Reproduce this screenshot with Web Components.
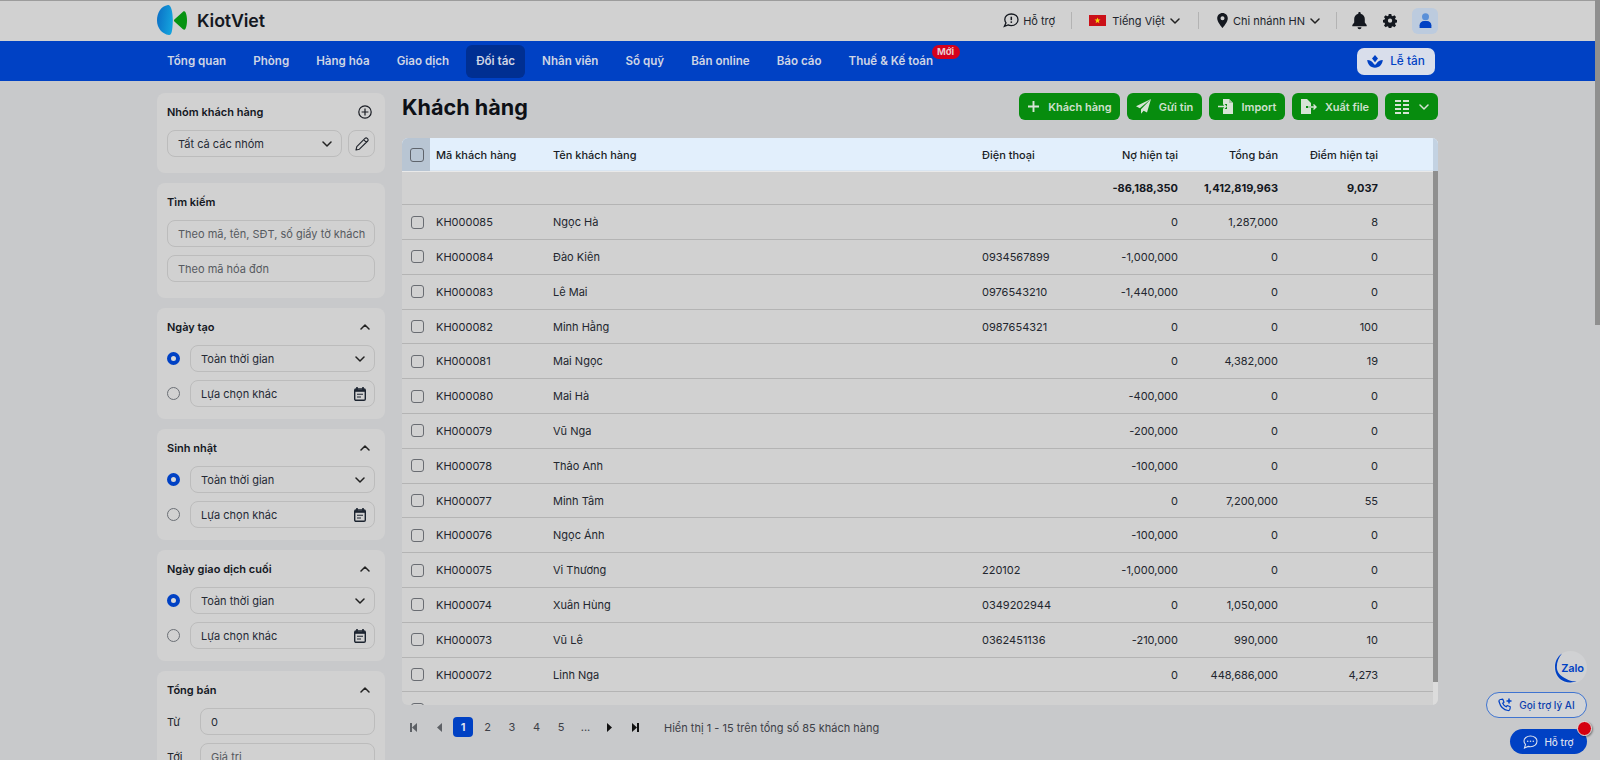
<!DOCTYPE html>
<html lang="vi"><head><meta charset="utf-8"><title>Khách hàng</title>
<style>
html,body{margin:0;padding:0;height:760px;overflow:hidden;background:#c8c9cb;font-family:Inter,"Noto Sans",sans-serif;color:#111}
</style></head><body>
<kv-app></kv-app>
<script>
const I={
 chev:'<svg width="10" height="6" viewBox="0 0 10 6" fill="none" stroke="currentColor" stroke-width="1.5" stroke-linecap="round" stroke-linejoin="round"><path d="M1 1l4 4 4-4"/></svg>',
 up:'<svg width="10" height="6" viewBox="0 0 10 6" fill="none" stroke="currentColor" stroke-width="1.5" stroke-linecap="round" stroke-linejoin="round"><path d="M1 5l4-4 4 4"/></svg>',
 cal:'<svg width="12" height="14" viewBox="0 0 12 14" fill="none"><path d="M3 0v3M9 0v3" stroke="#1c2430" stroke-width="1.6"/><rect x=".7" y="2" width="10.6" height="11.3" rx="1.3" stroke="#1c2430" stroke-width="1.4"/><path d="M1 2.6h10v2.2H1z" fill="#1c2430"/><path d="M3 7.3h6M3 10h4" stroke="#1c2430" stroke-width="1.1"/></svg>'
};
function def(name,render,css){
 customElements.define(name,class extends HTMLElement{
  connectedCallback(){ if(this.shadowRoot)return; const r=this.attachShadow({mode:'open'}); r.innerHTML='<style>'+css+'</style>'+render(this); }
 });
}
const a=(e,n,d='')=>e.getAttribute(n)??d;

def('kv-logo',()=>`
<svg width="31" height="31" viewBox="0 0 31 31"><defs><linearGradient id="g" x1="0" y1="0" x2="1" y2=".3"><stop offset="0" stop-color="#0b6cc4"/><stop offset="1" stop-color="#13a0dc"/></linearGradient></defs>
<path d="M11 0C4 1 0 8 0 15.500 0 23 5 29 12 30c2.500.3 3.500-3 3.800-15C15.800 7 14-.5 11 0z" fill="url(#g)"/>
<path d="M17.400 14.500L26 6.800c1-.8 2-.5 2.500.5 1 2.200 1.500 5.200 1.500 8.200s-.5 6-1.500 8.200c-.5 1-1.500 1.300-2.500.5l-8.600-7.700c-.6-.5-.6-1.500 0-2z" fill="#079312"/></svg><span>KiotViet</span>`,
`:host{display:flex;align-items:center;gap:9px}svg{display:block}span{font:600 17.8px Inter,sans-serif;color:#14181f;letter-spacing:-.1px}`);

def('kv-topbar',()=>`
<div class="wrap"><kv-logo></kv-logo><div class="right">
<span class="it"><svg width="16" height="15" viewBox="0 0 16 15" fill="none"><path d="M8.300 1C4.500 1 1.800 3.400 1.800 6.500c0 1.300.5 2.400 1.200 3.300L1.400 13.300l3.700-1.400c1 .5 2 .7 3.200.7 3.800 0 6.700-2.600 6.700-5.900C15 3.400 12.100 1 8.300 1z" stroke="#14181f" stroke-width="1.300"/><path d="M8.300 3.700v3.500" stroke="#14181f" stroke-width="1.500"/><circle cx="8.300" cy="9.100" r=".9" fill="#14181f"/></svg><span style="margin-left:4px">Hỗ trợ</span></span>
<i class="d" style="margin:0 17px 0 16px"></i>
<span class="it"><svg width="17" height="11" viewBox="0 0 17 11"><rect width="17" height="11" fill="#cb1018"/><path d="M8.500 2.400l.8 2.200h2.200L9.700 6l.7 2.200-1.900-1.300-1.900 1.300.7-2.200-1.800-1.400h2.200z" fill="#f6d70d"/></svg><span style="margin-left:6px">Tiếng Việt</span><span class="c" style="margin-left:5px">${I.chev}</span></span>
<i class="d" style="margin:0 18px 0 18px"></i>
<span class="it"><svg width="11" height="15" viewBox="0 0 11 15"><path fill-rule="evenodd" d="M5.500 0C2.500 0 .2 2.400.2 5.300c0 3.600 4.400 8.700 5.300 9.700.9-1 5.300-6.100 5.300-9.700C10.800 2.400 8.500 0 5.500 0zm0 7.300a2 2 0 110-4 2 2 0 010 4z" fill="#14181f"/></svg><span style="margin-left:5px">Chi nhánh HN</span><span class="c" style="margin-left:5px">${I.chev}</span></span>
<i class="d" style="margin:0 15px 0 16px"></i>
<svg width="15" height="18" viewBox="0 0 15 18"><path d="M7.500 0c-.7 0-1.200.5-1.200 1.200v.5C3.700 2.300 2.200 4.400 2.200 7v3.600L.3 13v1.200h14.400V13l-1.900-2.400V7c0-2.600-1.500-4.700-4.100-5.300v-.5C8.700.5 8.200 0 7.500 0z" fill="#14181f"/><path d="M5.500 15.300a2 2 0 004 0z" fill="#14181f"/></svg>
<svg style="margin-left:16px" width="14" height="14" viewBox="0 0 14 14"><path fill-rule="evenodd" d="M5.700 0h2.600l.4 1.900 1.200.5L11.500 1.300l1.800 1.800-1.100 1.600.5 1.200 1.900.4v2.600l-1.900.4-.5 1.200 1.100 1.600-1.800 1.800-1.600-1.100-1.200.5-.4 1.900H5.700l-.4-1.900-1.200-.5-1.600 1.100L.7 12.100l1.100-1.600-.5-1.200L-.6 8.900V6.300l1.900-.4.5-1.200L.7 3.100l1.800-1.800 1.600 1.100 1.200-.5zM7 9.300a2.200 2.200 0 100-4.500 2.200 2.200 0 000 4.500z" fill="#14181f" transform="translate(.3 -.1) scale(.96)"/></svg>
<span class="av"><svg width="13" height="15" viewBox="0 0 13 15"><circle cx="6.500" cy="3.700" r="3.500" fill="#5a90d8"/><path d="M.6 15v-2.700C.6 9.700 2.700 8 5 8h3c2.300 0 4.400 1.700 4.400 4.300V15z" fill="#0041c4"/></svg></span>
</div></div>`,
`:host{display:block;height:40px;background:#d1d1d1;border-top:1px solid #9c9c9c}
.wrap{width:1281px;height:40px;margin:0 auto;display:flex;align-items:center;justify-content:space-between;position:relative;top:-.5px}
.right{display:flex;align-items:center;font-size:11px;color:#20242c}
.it{display:inline-flex;align-items:center;white-space:nowrap}.c{display:inline-flex;color:#222}
.d{display:block;width:1px;height:17px;background:#b3b3b3}
.av{width:26px;height:26px;border-radius:6px;background:#bccbde;display:flex;align-items:center;justify-content:center;margin-left:15px}
svg{display:block;flex:none}`);

def('kv-nav',()=>{
 const items=['Tổng quan','Phòng','Hàng hóa','Giao dịch','Đối tác','Nhân viên','Sổ quỹ','Bán online','Báo cáo','Thuế & Kế toán'];
 return `<div class="wrap"><div class="menu">${items.map(t=>`<span class="m${t=='Đối tác'?' on':''}">${t}${t.startsWith('Thuế')?'<b>Mới</b>':''}</span>`).join('')}</div>
 <span class="lt"><svg width="16" height="13" viewBox="0 0 16 13" fill="#0041c4"><path d="M8 0L5 3.600 8 7.200l3-3.600zM.2 5c.4 4.500 3.300 7.500 7.800 7.800 4.500-.3 7.400-3.300 7.800-7.800-2.800.3-5.300 1.300-6.500 3.800L8 10 6.700 8.800C5.500 6.300 3 5.300.2 5z"/></svg>Lễ tân</span></div>`},
`:host{display:block;height:40px;background:#0041c4}
.wrap{width:1281px;height:40px;margin:0 auto;display:flex;align-items:center;justify-content:space-between}
.menu{display:flex;gap:7px;align-items:center}
.m{position:relative;padding:0 10px;height:33px;line-height:33px;border-radius:6px;font-size:11.6px;font-weight:600;color:#cfd5e4;white-space:nowrap}
.on{background:#002f92}
b{position:absolute;left:93px;top:0;width:28px;height:14px;line-height:14px;text-align:center;border-radius:8px;background:#d6001c;color:#e9c9cc;font-size:9.500px;font-weight:700}
.lt{display:flex;align-items:center;gap:7px;margin-right:3px;width:78px;height:27px;justify-content:center;box-sizing:border-box;border-radius:7px;background:#d9deeb;color:#0041c4;font-size:11.800px;font-weight:500}`);

def('kv-field',e=>`<span class="${a(e,'kind')=='ph'?'ph':''}">${a(e,'text')}</span>${e.hasAttribute('chev')?`<i>${I.chev}</i>`:''}${e.hasAttribute('cal')?`<i class="k">${I.cal}</i>`:''}`,
`:host{flex:1 0 0;min-width:0;display:flex;align-items:center;justify-content:space-between;min-height:27px;box-sizing:border-box;border:1px solid #bcbcbc;border-radius:8px;padding:0 8px 0 10px;font-size:11px;color:#252a35;white-space:nowrap}
:host(.col){flex:none}
.ph{color:#565a60}i{display:flex;color:#222;margin-right:1px}i.k{margin-right:0;margin-left:0}svg{display:block}`);

def('kv-card',e=>`<div class="h"><span>${a(e,'title')}</span>${e.hasAttribute('plus')?'<svg width="14" height="14" viewBox="0 0 14 14" fill="none" stroke="#1a1d24" stroke-width="1.200"><circle cx="7" cy="7" r="6.200"/><path d="M7 3.600v6.800M3.600 7h6.800"/></svg>':''}${e.hasAttribute('up')?`<i>${I.up}</i>`:''}</div><div class="b"><slot></slot></div>`,
`:host{display:block;background:#d1d1d1;border-radius:8px;padding:10px 10px var(--pb,12px)}
.h{height:18px;display:flex;align-items:center;justify-content:space-between;font-size:11px;font-weight:600;color:#14181f;margin-bottom:9px}
i{display:flex;color:#222;margin-right:5px}svg{display:block}.h svg[width="14"]{margin-right:3px}
.b{display:flex;flex-direction:column;gap:8px}`);

def('kv-choice',e=>`<i class="${e.hasAttribute('on')?'on':''}"></i><slot></slot>`,
`:host{display:flex;align-items:center;gap:10px}
i{flex:none;width:13px;height:13px;box-sizing:border-box;border-radius:50%;border:1px solid #6b6f75}
i.on{border:4px solid #0041c4;background:#d9d9d9}`);

def('kv-range',e=>`<span>${a(e,'label')}</span><slot></slot>`,
`:host{display:flex;align-items:center;font-size:11px;color:#20242c}span{width:33px;flex:none}`);

def('kv-btn',e=>`<slot></slot><span>${a(e,'text')}</span>`,
`:host{display:inline-flex;align-items:center;justify-content:center;gap:var(--g,8px);height:27px;border-radius:6px;background:#078c0e;color:#cfe0cd;font-size:11px;font-weight:600;white-space:nowrap}
span:empty{display:none}`);

def('kv-row',e=>{
 const v=a(e,'v').split('|');
 return `<i class="${e.classList.contains('sum')?'':'cb'}"></i>`+[0,1,2,3,4,5].map(k=>`<span class="${k>2?'r':''}">${v[k]??''}</span>`).join('');
},
`:host{display:grid;grid-template-columns:28px 123px 429px 100px 96px 100px 100px 60px;align-items:center;height:34.8px;box-sizing:border-box;border-bottom:1px solid #b4b4b4;font-size:11px;color:#22262e;white-space:nowrap}
.r{text-align:right}.cb{width:13px;height:13px;box-sizing:border-box;margin-left:9px;border:1px solid #696c72;border-radius:3px}
span:first-of-type{padding-left:6px}:host(.sum){font-weight:700;height:34.3px;color:#14181f}`);

def('kv-table',()=>{
 const d=[['KH000085','Ngọc Hà','','0','1,287,000','8'],['KH000084','Đào Kiên','0934567899','-1,000,000','0','0'],['KH000083','Lê Mai','0976543210','-1,440,000','0','0'],['KH000082','Minh Hằng','0987654321','0','0','100'],['KH000081','Mai Ngọc','','0','4,382,000','19'],['KH000080','Mai Hà','','-400,000','0','0'],['KH000079','Vũ Nga','','-200,000','0','0'],['KH000078','Thảo Anh','','-100,000','0','0'],['KH000077','Minh Tâm','','0','7,200,000','55'],['KH000076','Ngọc Ánh','','-100,000','0','0'],['KH000075','Vi Thương','220102','-1,000,000','0','0'],['KH000074','Xuân Hùng','0349202944','0','1,050,000','0'],['KH000073','Vũ Lê','0362451136','-210,000','990,000','10'],['KH000072','Linh Nga','','0','448,686,000','4,273']];
 return `<div class="head"><i class="c0"><i class="cb"></i></i><span class="p">Mã khách hàng</span><span>Tên khách hàng</span><span>Điện thoại</span><span class="r">Nợ hiện tại</span><span class="r">Tổng bán</span><span class="r">Điểm hiện tại</span><span></span></div>
 <kv-row class="sum" v="|||-86,188,350|1,412,819,963|9,037"></kv-row>
 ${d.map(r=>`<kv-row v="${r.join('|')}"></kv-row>`).join('')}<kv-row v=""></kv-row>
 <div class="tr"></div><div class="sb"></div><div class="sh"></div>`},
`:host{display:block;position:relative;height:567px;overflow:hidden;background:#d1d1d1;border-radius:6px}
.head{display:grid;grid-template-columns:28px 123px 429px 100px 96px 100px 100px 60px;align-items:center;height:33px;box-sizing:border-box;background:#e2effc;border-bottom:1px solid #d9e5f1;box-shadow:0 1px 0 #e9e9e9;font-size:11px;font-weight:500;color:#181c24;white-space:nowrap}
.c0{height:33px;background:#b8c5d3;display:flex;align-items:center}
.cb{width:14px;height:14px;box-sizing:border-box;margin-left:8px;border:1px solid #5f646c;border-radius:3px}
.p{padding-left:6px}.r{text-align:right}
.tr{position:absolute;right:0;top:33px;bottom:0;width:5px;background:#dcdcdc}
.sb{position:absolute;right:0;top:33px;width:5px;height:511px;background:#8f8f8f}
.sh{position:absolute;right:0;top:0;width:5px;height:33px;background:#c3d2e2}`);

def('kv-pager',()=>{
 const tri=(r,b)=>`<svg width="8" height="9" viewBox="0 0 8 9" fill="currentColor">${r?'<path d="M1 0l5 4.500L1 9z"/>':'<path d="M7 0L2 4.500 7 9z"/>'}${b?(r?'<path d="M6 0h2v9H6z"/>':'<path d="M0 0h2v9H0z"/>'):''}</svg>`;
 return `<span class="g">${tri(0,1)}</span><span class="g">${tri(0,0)}</span><b>1</b><span>2</span><span>3</span><span>4</span><span>5</span><span>...</span><span class="g dk">${tri(1,0)}</span><span class="g dk">${tri(1,1)}</span><em>Hiển thị 1 - 15 trên tổng số 85 khách hàng</em>`},
`:host{display:flex;align-items:center;gap:4.500px;height:20px;margin-top:12px;margin-left:2px;font-size:11px;color:#3d4047}
span,b{width:20px;height:20px;display:flex;align-items:center;justify-content:center}
.g{color:#5e6166}.dk{color:#111}
b{background:#0041c4;color:#d8dfee;border-radius:4px;font-weight:700}
em{font-style:normal;margin-left:15px;white-space:nowrap;color:#3d4047;position:relative;top:.5px}svg{display:block}`);

def('kv-float',()=>`
<div class="z"><svg width="33" height="33" viewBox="0 0 33 33" fill="none"><path d="M8 2.500C3.500 5.500 1 10.500 1 16c0 7 4 12.500 9.500 14.500 3.500 1.300 8.500 1.300 12-.2-4 .2-7.500-.6-10-2.300C6 25 2.800 21 2.800 16c0-5 2-9.800 5.200-13.500z" fill="#0041c4"/></svg><span>Zalo</span></div>
<div class="ai"><svg width="15" height="15" viewBox="0 0 15 15" fill="none" stroke="#0041c4" stroke-width="1.200" stroke-linejoin="round"><path d="M2.500 1.500l2.300-.3 1.200 3-1.300 1.100c.7 1.600 1.900 2.800 3.500 3.500l1.100-1.300 3 1.200-.3 2.300c-.2 1-1 1.700-2 1.500C5.700 12 2.300 8.300 1 3.500c-.2-1 .5-1.800 1.500-2z"/><path d="M11 .5v5M8.500 3h5" stroke-width="1.500"/></svg><span>Gọi trợ lý AI</span></div>
<div class="ht"><svg width="15" height="14" viewBox="0 0 15 14" fill="none" stroke="#d8dfee" stroke-width="1.100"><path d="M7.500 1C3.800 1 1 3.200 1 6c0 1.300.6 2.400 1.500 3.300L1.500 13l3.700-1.600c.7.200 1.500.3 2.300.3 3.700 0 6.500-2.300 6.500-5.700C14 3.200 11.200 1 7.500 1z"/><circle cx="4.700" cy="6.300" r=".8" fill="#d8dfee" stroke="none"/><circle cx="7.500" cy="6.300" r=".8" fill="#d8dfee" stroke="none"/><circle cx="10.300" cy="6.300" r=".8" fill="#d8dfee" stroke="none"/></svg><span>Hỗ trợ</span><i></i></div>`,
`:host{position:absolute;right:8px;top:651px;display:flex;flex-direction:column;align-items:flex-end;font-size:10px}
.z{position:relative;width:33px;height:33px;border-radius:50%;background:#d0d1d3;display:flex;align-items:center;justify-content:center;color:#0041c4;font-weight:600;font-size:11px;letter-spacing:-.2px;margin-bottom:8px}
.z svg{position:absolute;left:0;top:0}.z span{margin-left:4px}
.ai{width:101px;height:26px;box-sizing:border-box;border:1px solid #3f74d0;border-radius:14px;display:flex;align-items:center;justify-content:center;gap:6px;color:#0b3fae;background:#d2d4d7;font-weight:500;white-space:nowrap}
.ht{position:relative;margin-top:11px;width:77px;height:25px;border-radius:13px;background:#0041c4;color:#d8dfee;display:flex;align-items:center;justify-content:center;gap:6px;font-weight:500}
.ht i{position:absolute;right:-5px;top:-8px;width:13px;height:13px;background:#d50010;border-radius:50%;border:1.500px solid #e6e6e6;box-shadow:1px 1px 2px #0006}svg{display:block;flex:none}`);

const icons={
 plus:'<svg width="13" height="13" viewBox="0 0 13 13" fill="none" stroke="#d7e4d5" stroke-width="1.900"><path d="M6.500 1v11M1 6.500h11"/></svg>',
 send:'<svg width="15" height="15" viewBox="0 0 15 15" fill="#d7e4d5"><path d="M15 0L0 7.300l3.800 2zM15 0L5 10.200v4.500l2.600-3L11 13.500z"/></svg>',
 imp:'<svg width="16" height="15" viewBox="0 0 16 15"><path d="M5 0h6l4 4v11H5v-5h4V5H5z" fill="#d7e4d5"/><path d="M11 0v4h4" fill="#a7c4a5"/><path d="M0 7.500h8M5.500 5l2.500 2.500L5.500 10" stroke="#d7e4d5" stroke-width="1.400" fill="none"/></svg>',
 exp:'<svg width="16" height="15" viewBox="0 0 16 15"><path d="M0 0h6l4 4v3H5v2h5v6H0z" fill="#d7e4d5"/><path d="M7 8h8M12.500 5.500L15 8l-2.500 2.500" stroke="#d7e4d5" stroke-width="1.400" fill="none"/></svg>',
 grid:'<svg width="14" height="14" viewBox="0 0 14 14" fill="#d7e4d5"><path d="M0 0h6v2H0zM8 0h6v2H8zM0 4h6v2H0zM8 4h6v2H8zM0 8h6v2H0zM8 8h6v2H8zM0 12h6v2H0zM8 12h6v2H8z"/></svg>'
};
const tz=(t)=>`<kv-card title="${t}" up><kv-choice on><kv-field text="Toàn thời gian" chev></kv-field></kv-choice><kv-choice><kv-field text="Lựa chọn khác" cal></kv-field></kv-choice></kv-card>`;

def('kv-app',()=>`
<kv-topbar></kv-topbar><kv-nav></kv-nav>
<div class="page">
 <aside>
  <kv-card title="Nhóm khách hàng" plus style="--pb:16px"><div class="r"><kv-field text="Tất cả các nhóm" chev></kv-field><span class="e"><svg width="14" height="14" viewBox="0 0 14 14" fill="none" stroke="#20242c" stroke-width="1.100" stroke-linejoin="round"><path d="M1 13l.8-3.400L10 1.300c.6-.6 1.600-.6 2.200 0l.5.5c.6.6.6 1.600 0 2.200L4.400 12.200zM8.700 2.700l2.600 2.600"/></svg></span></div></kv-card>
  <kv-card title="Tìm kiếm" style="--pb:16px"><kv-field class="col" kind="ph" text="Theo mã, tên, SĐT, số giấy tờ khách"></kv-field><kv-field class="col" kind="ph" text="Theo mã hóa đơn"></kv-field></kv-card>
  ${tz('Ngày tạo')}${tz('Sinh nhật')}${tz('Ngày giao dịch cuối')}
  <kv-card title="Tổng bán" up><kv-range label="Từ"><kv-field text="0"></kv-field></kv-range><kv-range label="Tới"><kv-field kind="ph" text="Giá trị"></kv-field></kv-range></kv-card>
 </aside>
 <main>
  <div class="top"><h1>Khách hàng</h1><div class="btns">
   <kv-btn text="Khách hàng" style="width:101px">${icons.plus}</kv-btn>
   <kv-btn text="Gửi tin" style="width:75px">${icons.send}</kv-btn>
   <kv-btn text="Import" style="width:76px">${icons.imp}</kv-btn>
   <kv-btn text="Xuất file" style="width:86px">${icons.exp}</kv-btn>
   <kv-btn style="width:53px;--g:10px">${icons.grid}<span style="display:flex;color:#d7e4d5">${I.chev}</span></kv-btn>
  </div></div>
  <kv-table></kv-table>
  <kv-pager></kv-pager>
 </main>
</div>
<kv-float></kv-float>`,
`:host{display:block;position:relative;width:1595px;height:760px;overflow:hidden}
.page{width:1281px;height:679px;margin:0 auto;display:flex;gap:17px;padding-top:12px;box-sizing:border-box;overflow:hidden}
aside{width:228px;flex:none;display:flex;flex-direction:column;gap:10px}
main{flex:1;min-width:0}
.r{display:flex;gap:6px}.e{width:27px;height:27px;box-sizing:border-box;flex:none;border:1px solid #bcbcbc;border-radius:8px;display:flex;align-items:center;justify-content:center}svg{display:block}
.top{height:27px;display:flex;align-items:center;justify-content:space-between;margin-bottom:18px}
h1{margin:0;font-size:21.600px;line-height:30px;font-weight:700;color:#0d1016}
.btns{display:flex;gap:7px}`);
</script>
<div style="position:absolute;left:1595px;top:0;width:5px;height:325px;background:#8f8f8f"></div>
</body></html>
